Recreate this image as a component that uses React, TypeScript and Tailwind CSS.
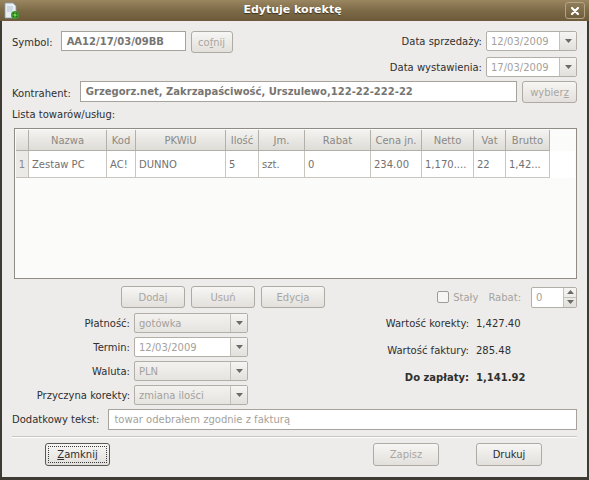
import React from "react";

const font = { fontFamily: '"DejaVu Sans", "Liberation Sans", sans-serif' };

function Arrow() {
  return (
    <svg width="7" height="4" viewBox="0 0 7 4">
      <path d="M0 0h7L3.5 4z" fill="#6b6a67" />
    </svg>
  );
}

function Combo({ value, className, entry }: { value: string; className: string; entry?: boolean }) {
  return (
    <div
      className={`flex h-[20px] overflow-hidden rounded-[2px] border border-[#b2afa9] ${
        entry ? "bg-white" : "bg-gradient-to-b from-[#f3f2f0] to-[#e6e4e0]"
      } ${className}`}
    >
      <div className="flex flex-1 items-center px-[4px] text-[10px] text-[#a4a19c]">{value}</div>
      <div className="flex w-[17px] items-center justify-center border-l border-[#c4c1bb] bg-gradient-to-b from-[#f6f5f3] to-[#e2e0dc]">
        <Arrow />
      </div>
    </div>
  );
}

function Btn({
  children,
  className,
  disabled,
  focused,
}: {
  children: React.ReactNode;
  className: string;
  disabled?: boolean;
  focused?: boolean;
}) {
  return (
    <div
      className={`flex items-center justify-center rounded-[3px] border bg-gradient-to-b from-[#f7f6f4] to-[#e3e0dc] text-[10px] ${
        focused ? "border-[#5a5853] p-[2px]" : "border-[#aeaba5]"
      } ${disabled ? "text-[#a9a6a1]" : "text-[#2e2e2e]"} ${className}`}
    >
      {focused ? (
        <div className="flex h-full w-full items-center justify-center border border-dotted border-[#3a3a3a]">
          {children}
        </div>
      ) : (
        children
      )}
    </div>
  );
}

const cols = [
  { name: "Nazwa", w: "w-[78px]", v: "Zestaw PC" },
  { name: "Kod", w: "w-[29px]", v: "AC!" },
  { name: "PKWiU", w: "w-[90px]", v: "DUNNO" },
  { name: "Ilość", w: "w-[33px]", v: "5" },
  { name: "Jm.", w: "w-[46px]", v: "szt." },
  { name: "Rabat", w: "w-[66px]", v: "0" },
  { name: "Cena jn.", w: "w-[51px]", v: "234.00" },
  { name: "Netto", w: "w-[52px]", v: "1,170...." },
  { name: "Vat", w: "w-[32px]", v: "22" },
  { name: "Brutto", w: "w-[44px]", v: "1,42..." },
];

function Table() {
  return (
    <div className="ml-[2px] mt-[7px] h-[151px] border border-[#8f8c86] bg-[#fbfbfa] p-[1px]">
      <div className="flex h-[21px]">
        <div className="w-[13px] border-b border-r border-[#b3b0aa] bg-gradient-to-b from-[#f4f3f1] to-[#dedcd7]" />
        {cols.map((c) => (
          <div
            key={c.name}
            className={`flex items-center justify-center border-b border-r border-[#b3b0aa] bg-gradient-to-b from-[#f4f3f1] to-[#dedcd7] text-[10px] text-[#8b8984] ${c.w}`}
          >
            {c.name}
          </div>
        ))}
      </div>
      <div className="flex h-[27px] bg-white">
        <div className="flex w-[13px] items-center justify-center border-b border-r border-[#c3c0ba] bg-[#eceae6] text-[10px] text-[#8b8984]">
          1
        </div>
        {cols.map((c) => (
          <div
            key={c.name}
            className={`flex items-center overflow-hidden whitespace-nowrap border-b border-r border-[#c9c6c0] px-[3px] text-[10px] text-[#737170] ${c.w}`}
          >
            {c.v}
          </div>
        ))}
      </div>
    </div>
  );
}

function TitleIcon() {
  return (
    <svg width="16" height="18" viewBox="0 0 16 18">
      <path d="M1 1h8l3 3v12H1z" fill="#e8eef4" stroke="#8a9aa8" strokeWidth="0.8" />
      <path d="M3 5h6M3 7h6M3 9h5" stroke="#9fb3c4" strokeWidth="0.8" />
      <circle cx="11" cy="13" r="4" fill="#3c9a2a" />
      <path d="M9 11l4 4M13 11l-4 4" stroke="#1f6e16" strokeWidth="1.2" />
      <circle cx="11" cy="13" r="1.5" fill="#7bd05a" />
    </svg>
  );
}

export default function App() {
  return (
    <div className="flex h-[480px] w-[589px] flex-col overflow-hidden bg-[#3e3a34]" style={font}>
      <div className="flex h-[21px] items-center bg-gradient-to-b from-[#9a8660] via-[#7d6a47] to-[#6c5a3a] px-[4px]">
        <TitleIcon />
        <div className="flex-1 text-center text-[11px] font-bold text-white [text-shadow:0_1px_1px_#3b3020]">
          Edytuje korektę
        </div>
        <div className="flex h-[17px] w-[20px] items-center justify-center rounded-[3px] border border-[#b5a584] bg-gradient-to-b from-[#8f7c58] to-[#6f5d3d]">
          <svg width="10" height="10" viewBox="0 0 10 10">
            <path d="M2 2l6 6M8 2l-6 6" stroke="white" strokeWidth="2.2" strokeLinecap="round" />
          </svg>
        </div>
      </div>

      <div className="mx-[2px] mb-[3px] flex flex-1 flex-col bg-[#edecea] pl-[10px] pr-[10px] pt-[10px] text-[10px] text-[#2f2f2f]">
        <div className="flex items-start justify-between">
          <div className="flex items-start">
            <span className="mt-[4px]">Symbol:</span>
            <div className="ml-[8px] flex h-[20px] w-[125px] items-center border border-[#a6a39d] bg-white px-[5px] font-bold text-[#767572]">
              AA12/17/03/09BB
            </div>
            <Btn className="ml-[5px] h-[22px] w-[42px]" disabled>
              <span>
                co<span className="underline">f</span>nij
              </span>
            </Btn>
          </div>
          <div className="flex flex-col gap-[6px]">
            <div className="flex items-center justify-end gap-[4px]">
              <span>Data sprzedaży:</span>
              <Combo value="12/03/2009" className="w-[91px]" entry />
            </div>
            <div className="flex items-center justify-end gap-[4px]">
              <span>Data wystawienia:</span>
              <Combo value="17/03/2009" className="w-[91px]" entry />
            </div>
          </div>
        </div>

        <div className="mt-[4px] flex items-start">
          <span className="mt-[5px]">Kontrahent:</span>
          <div className="ml-[9px] flex h-[21px] flex-1 items-center border border-[#a6a39d] bg-white px-[5px] font-bold text-[#767572]">
            Grzegorz.net, Zakrzapaściwość, Urszulewo,122-22-222-22
          </div>
          <Btn className="ml-[5px] h-[22px] w-[55px]" disabled>
            <span>
              wybier<span className="underline">z</span>
            </span>
          </Btn>
        </div>

        <div className="mt-[6px] h-[12px] leading-[12px]">Lista towarów/usług:</div>
        <Table />

        <div className="mt-[7px] flex h-[22px] items-center">
          <Btn className="ml-[109px] h-[22px] w-[64px]" disabled>
            Dodaj
          </Btn>
          <Btn className="ml-[6px] h-[22px] w-[64px]" disabled>
            Usuń
          </Btn>
          <Btn className="ml-[6px] h-[22px] w-[64px]" disabled>
            Edycja
          </Btn>
          <div className="flex-1" />
          <div className="h-[12px] w-[12px] rounded-[2px] border border-[#9f9c96] bg-[#f7f6f4]" />
          <span className="ml-[4px] text-[#a6a39e]">Stały</span>
          <span className="ml-[10px] text-[#a6a39e]">Rabat:</span>
          <div className="ml-[10px] flex h-[21px] w-[46px] overflow-hidden rounded-[2px] border border-[#b2afa9] bg-white">
            <div className="flex flex-1 items-center px-[4px] text-[#a4a19c]">0</div>
            <div className="flex w-[13px] flex-col border-l border-[#c4c1bb] bg-gradient-to-b from-[#f6f5f3] to-[#e2e0dc]">
              <div className="flex flex-1 items-center justify-center border-b border-[#c4c1bb]">
                <svg width="7" height="4" viewBox="0 0 7 4">
                  <path d="M0 4h7L3.5 0z" fill="#6b6a67" />
                </svg>
              </div>
              <div className="flex flex-1 items-center justify-center">
                <Arrow />
              </div>
            </div>
          </div>
        </div>

        <div className="mt-[5px] flex">
          <div className="grid grid-cols-[118px_114px] gap-x-[4px] gap-y-[4px]">
            <span className="flex h-[20px] items-center justify-end">Płatność:</span>
            <Combo value="gotówka" className="w-[114px]" />
            <span className="flex h-[20px] items-center justify-end">Termin:</span>
            <Combo value="12/03/2009" className="w-[114px]" entry />
            <span className="flex h-[20px] items-center justify-end">Waluta:</span>
            <Combo value="PLN" className="w-[114px]" />
            <span className="flex h-[20px] items-center justify-end">Przyczyna korekty:</span>
            <Combo value="zmiana ilości" className="w-[114px]" />
          </div>
          <div className="ml-[111px] grid h-fit grid-cols-[110px_auto] gap-x-[7px] gap-y-[7px]">
            <span className="flex h-[20px] items-center justify-end">Wartość korekty:</span>
            <span className="flex h-[20px] items-center">1,427.40</span>
            <span className="flex h-[20px] items-center justify-end">Wartość faktury:</span>
            <span className="flex h-[20px] items-center">285.48</span>
            <span className="flex h-[20px] items-center justify-end font-bold">Do zapłaty:</span>
            <span className="flex h-[20px] items-center font-bold">1,141.92</span>
          </div>
        </div>

        <div className="mt-[4px] flex items-center">
          <span>Dodatkowy tekst:</span>
          <div className="ml-[9px] flex h-[21px] flex-1 items-center border border-[#a6a39d] bg-white px-[5px] text-[#a4a19c]">
            towar odebrałem zgodnie z fakturą
          </div>
        </div>

        <div className="mt-[6px] h-[2px] border-b border-t border-b-white border-t-[#c9c6c0]" />

        <div className="mt-[5px] flex h-[23px]">
          <Btn className="ml-[33px] h-[23px] w-[65px]" focused>
            <span>
              <span className="underline">Z</span>amknij
            </span>
          </Btn>
          <div className="flex-1" />
          <Btn className="h-[23px] w-[66px]" disabled>
            Zapisz
          </Btn>
          <Btn className="ml-[37px] mr-[35px] h-[23px] w-[66px]">Drukuj</Btn>
        </div>
      </div>
    </div>
  );
}
